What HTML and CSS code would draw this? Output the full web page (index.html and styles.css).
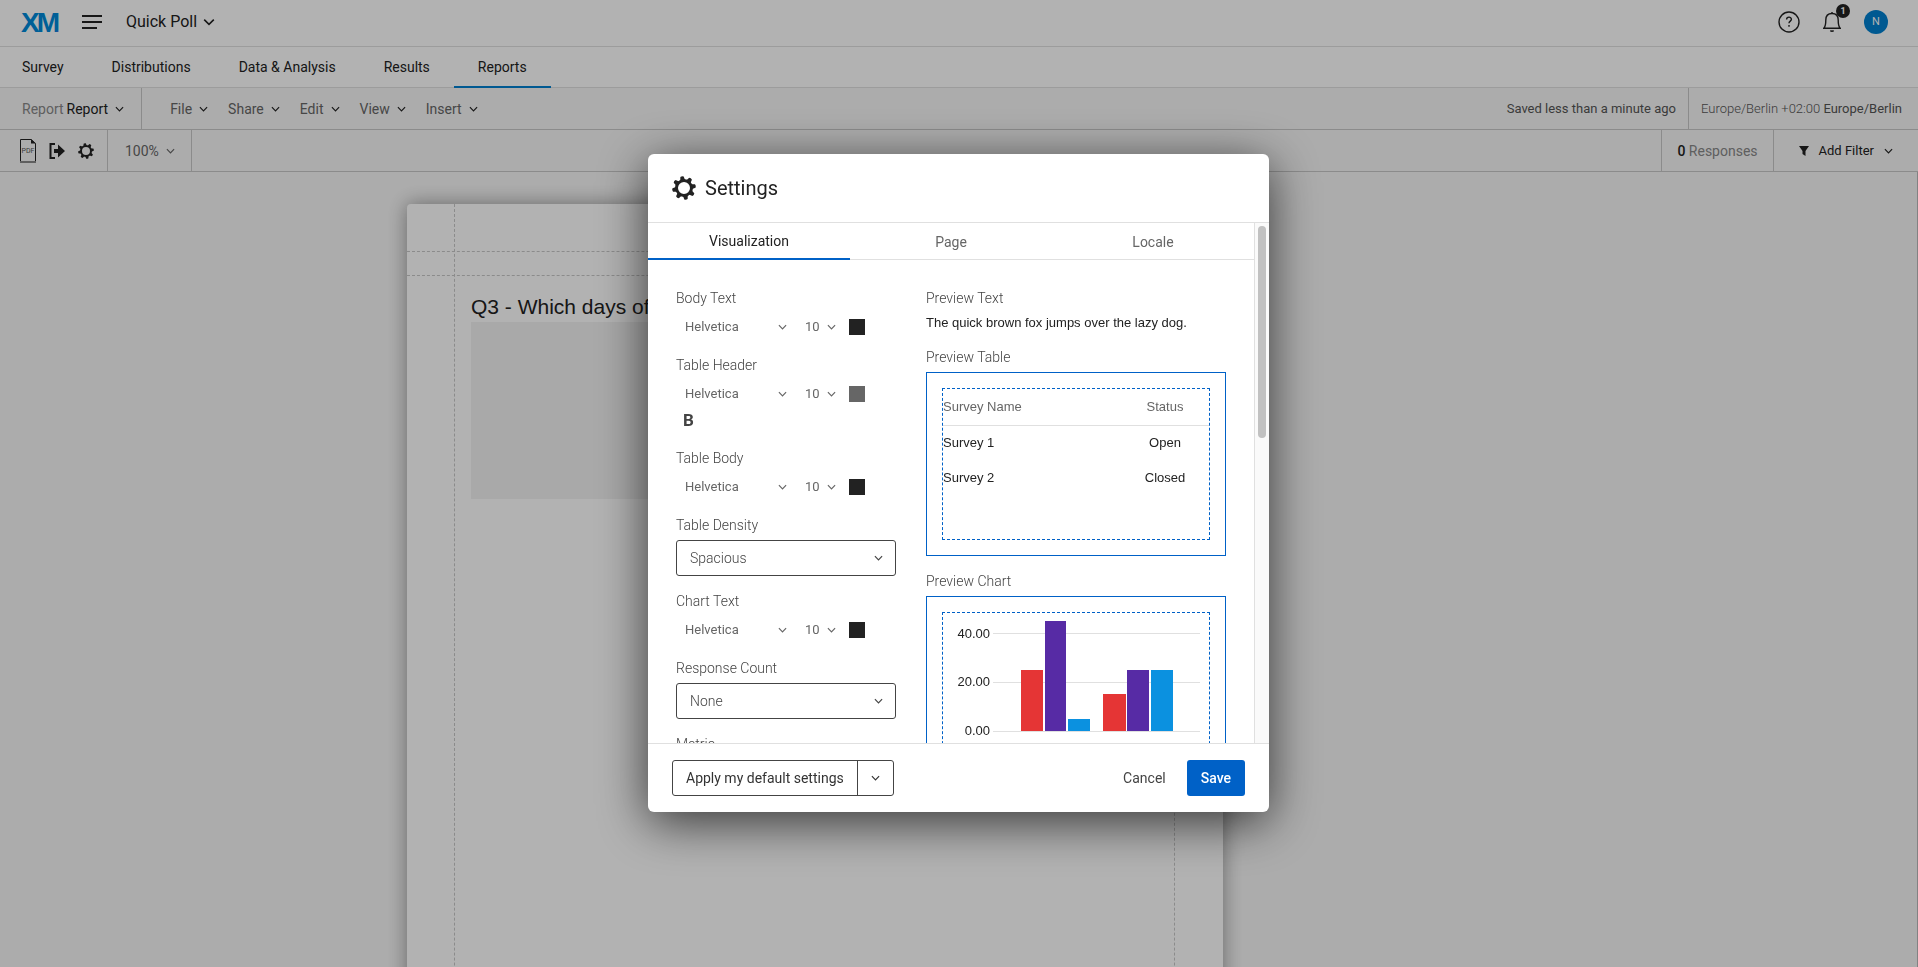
FILE: index.html
```html
<!DOCTYPE html>
<html lang="en">
<head>
    <meta charset="UTF-8">
    <meta name="viewport" content="width=device-width, initial-scale=1.0">
    <title>Quick Poll - Reports</title>
    <link rel="stylesheet" href="styles.css">
</head>
<body>

<!-- shared icons -->
<svg class="sprite" width="0" height="0" aria-hidden="true">
    <symbol id="chevron" viewBox="0 0 10 6">
        <path d="M1 1l4 4 4-4" fill="none" stroke="currentColor" stroke-width="1.3"/>
    </symbol>
    <symbol id="gear" viewBox="0 0 24 24">
        <circle cx="12" cy="12" r="7.5" fill="none" stroke="currentColor" stroke-width="3"/>
        <g fill="currentColor">
            <path id="tooth" d="M9.6 4.2L10.3.6Q12-.4 13.7.6l.7 3.600z" transform="rotate(-10 12 12)"/>
            <use href="#tooth" transform="rotate(45 12 12)"/>
            <use href="#tooth" transform="rotate(90 12 12)"/>
            <use href="#tooth" transform="rotate(135 12 12)"/>
            <use href="#tooth" transform="rotate(180 12 12)"/>
            <use href="#tooth" transform="rotate(225 12 12)"/>
            <use href="#tooth" transform="rotate(270 12 12)"/>
            <use href="#tooth" transform="rotate(315 12 12)"/>
        </g>
    </symbol>
</svg>

<header class="topbar">
    <a href="#" class="logo" aria-label="XM home">
        <svg width="38" height="22" viewBox="0 0 38 22">
            <defs>
                <linearGradient id="xm" x1="0" y1="0" x2="1" y2="1">
                    <stop offset=".84" stop-color="#0088d8"/>
                    <stop offset=".9" stop-color="#8a3ff0"/>
                </linearGradient>
            </defs>
            <text x="0" y="21" fill="url(#xm)">X<tspan dx="-3">M</tspan></text>
        </svg>
    </a>
    <button class="icon-btn menu-btn" aria-label="Menu">
        <svg width="20" height="14" viewBox="0 0 20 14" stroke="currentColor" stroke-width="2"><path d="M0 1h20M0 7h20M0 13h15"/></svg>
    </button>
    <button class="project">Quick Poll <svg class="chevron-lg"><use href="#chevron"/></svg></button>
    <div class="topbar-right">
        <button class="icon-btn" aria-label="Help">
            <svg width="22" height="22" viewBox="0 0 22 22" fill="none" stroke="currentColor" stroke-width="1.4">
                <circle cx="11" cy="11" r="10"/>
                <path d="M8.600 8.600c0-3.200 4.800-3.200 4.800-.3 0 1.900-2.400 1.800-2.400 4"/>
                <path d="M11 14v1.700"/>
            </svg>
        </button>
        <button class="icon-btn bell" aria-label="Notifications">
            <svg width="18" height="20" viewBox="0 0 18 20" fill="none" stroke="currentColor" stroke-width="1.4">
                <path d="M.8 16.200c1.800-1.700 2-3 2-8.200C2.800 3.600 5.500 1.500 9 1.500S15.200 3.600 15.200 8c0 5.200.2 6.500 2 8.200z"/>
                <path d="M9 0v1.500M7.300 18.600q1.700 1.200 3.400 0"/>
            </svg>
            <span class="badge">1</span>
        </button>
        <button class="avatar">N</button>
    </div>
</header>

<nav class="tabs">
    <a href="#">Survey</a>
    <a href="#">Distributions</a>
    <a href="#">Data &amp; Analysis</a>
    <a href="#">Results</a>
    <a href="#" class="active">Reports</a>
</nav>

<div class="menubar">
    <button class="report-select"><span>Report</span> Report <svg class="chevron"><use href="#chevron"/></svg></button>
    <div class="menus">
        <button>File <svg class="chevron"><use href="#chevron"/></svg></button>
        <button>Share <svg class="chevron"><use href="#chevron"/></svg></button>
        <button>Edit <svg class="chevron"><use href="#chevron"/></svg></button>
        <button>View <svg class="chevron"><use href="#chevron"/></svg></button>
        <button>Insert <svg class="chevron"><use href="#chevron"/></svg></button>
    </div>
    <div class="saved">Saved less than a minute ago</div>
    <div class="timezone">Europe/Berlin +02:00 <b>Europe/Berlin</b></div>
</div>

<div class="toolbar">
    <div class="tools">
        <button class="icon-btn" aria-label="Export PDF">
            <svg width="16" height="24" viewBox="0 0 16 24">
                <path d="M.5 22.500V.5h10.500l4.500 4v18" fill="none" stroke="currentColor"/>
                <path d="M11 0v4.500h5z" fill="currentColor"/>
                <path d="M0 23h16" stroke="#888" stroke-width="2"/>
                <text x="8" y="14" text-anchor="middle" class="pdf-text">PDF</text>
            </svg>
        </button>
        <button class="icon-btn" aria-label="Exit">
            <svg width="16" height="16" viewBox="0 0 16 16">
                <path d="M6 1H1.500v14H6" fill="none" stroke="currentColor" stroke-width="2"/>
                <path d="M5 6h4V1.500L16 8l-7 6.500V10H5z" fill="currentColor"/>
            </svg>
        </button>
        <button class="icon-btn" aria-label="Settings"><svg width="16" height="16"><use href="#gear"/></svg></button>
    </div>
    <button class="zoom">100% <svg class="chevron"><use href="#chevron"/></svg></button>
    <div class="responses"><b>0</b> Responses</div>
    <button class="filter">
        <svg width="10" height="10" viewBox="0 0 10 10"><path d="M0 0h10L6.500 5v5l-3-2V5z" fill="currentColor"/></svg>
        Add Filter
        <svg class="chevron"><use href="#chevron"/></svg>
    </button>
</div>

<main class="canvas">
    <div class="sheet">
        <div class="sheet-header"></div>
        <div class="sheet-gap"></div>
        <div class="sheet-body">
            <h1>Q3 - Which days of the week work for you?</h1>
            <div class="placeholder"></div>
        </div>
    </div>
</main>

<div class="overlay">
    <div class="modal" role="dialog" aria-labelledby="modal-title">
        <div class="modal-header">
            <svg width="24" height="24"><use href="#gear"/></svg>
            <h2 id="modal-title">Settings</h2>
        </div>

        <div class="modal-body">
            <div class="modal-content">
                <div class="modal-tabs">
                    <button class="active">Visualization</button>
                    <button>Page</button>
                    <button>Locale</button>
                </div>
                <div class="columns">
                    <form class="fields">
                        <div class="field">
                            <label for="body-font">Body Text</label>
                            <div class="font-row">
                                <div class="select font"><select id="body-font"><option>Helvetica</option></select><svg class="chevron"><use href="#chevron"/></svg></div>
                                <div class="select size"><select aria-label="Body text size"><option>10</option></select><svg class="chevron"><use href="#chevron"/></svg></div>
                                <button type="button" class="swatch" aria-label="Body text color"></button>
                            </div>
                        </div>
                        <div class="field">
                            <label for="header-font">Table Header</label>
                            <div class="font-row">
                                <div class="select font"><select id="header-font"><option>Helvetica</option></select><svg class="chevron"><use href="#chevron"/></svg></div>
                                <div class="select size"><select aria-label="Table header size"><option>10</option></select><svg class="chevron"><use href="#chevron"/></svg></div>
                                <button type="button" class="swatch gray" aria-label="Table header color"></button>
                            </div>
                            <button type="button" class="bold-btn">B</button>
                        </div>
                        <div class="field">
                            <label for="table-font">Table Body</label>
                            <div class="font-row">
                                <div class="select font"><select id="table-font"><option>Helvetica</option></select><svg class="chevron"><use href="#chevron"/></svg></div>
                                <div class="select size"><select aria-label="Table body size"><option>10</option></select><svg class="chevron"><use href="#chevron"/></svg></div>
                                <button type="button" class="swatch" aria-label="Table body color"></button>
                            </div>
                        </div>
                        <div class="field">
                            <label for="density">Table Density</label>
                            <div class="select boxed"><select id="density"><option>Spacious</option></select><svg class="chevron"><use href="#chevron"/></svg></div>
                        </div>
                        <div class="field">
                            <label for="chart-font">Chart Text</label>
                            <div class="font-row">
                                <div class="select font"><select id="chart-font"><option>Helvetica</option></select><svg class="chevron"><use href="#chevron"/></svg></div>
                                <div class="select size"><select aria-label="Chart text size"><option>10</option></select><svg class="chevron"><use href="#chevron"/></svg></div>
                                <button type="button" class="swatch" aria-label="Chart text color"></button>
                            </div>
                        </div>
                        <div class="field">
                            <label for="count">Response Count</label>
                            <div class="select boxed"><select id="count"><option>None</option></select><svg class="chevron"><use href="#chevron"/></svg></div>
                        </div>
                        <div class="field">
                            <label for="metric">Metric</label>
                            <div class="select boxed"><select id="metric"><option>None</option></select><svg class="chevron"><use href="#chevron"/></svg></div>
                        </div>
                    </form>

                    <div class="previews">
                        <h3>Preview Text</h3>
                        <p class="preview-text">The quick brown fox jumps over the lazy dog.</p>

                        <h3>Preview Table</h3>
                        <div class="preview-box">
                            <div class="preview-inner">
                                <table>
                                    <thead>
                                        <tr><th>Survey Name</th><th>Status</th></tr>
                                    </thead>
                                    <tbody>
                                        <tr><td>Survey 1</td><td>Open</td></tr>
                                        <tr><td>Survey 2</td><td>Closed</td></tr>
                                    </tbody>
                                </table>
                            </div>
                        </div>

                        <h3>Preview Chart</h3>
                        <div class="preview-box">
                            <div class="preview-inner">
                                <svg class="chart" width="266" height="150" viewBox="0 0 266 150">
                                    <path d="M50 20.500h207M50 69.500h207M50 118.500h207" stroke="#e0e0e0"/>
                                    <g text-anchor="end">
                                        <text x="47" y="25">40.00</text>
                                        <text x="47" y="73">20.00</text>
                                        <text x="47" y="122">0.00</text>
                                    </g>
                                    <g fill="#e53535">
                                        <rect x="78" y="57" width="22" height="61"/>
                                        <rect x="160" y="81" width="23" height="37"/>
                                    </g>
                                    <g fill="#572ba5">
                                        <rect x="102" y="8" width="21" height="110"/>
                                        <rect x="184" y="57" width="22" height="61"/>
                                    </g>
                                    <g fill="#0b91e0">
                                        <rect x="125" y="106" width="22" height="12"/>
                                        <rect x="208" y="57" width="22" height="61"/>
                                    </g>
                                </svg>
                            </div>
                        </div>
                    </div>
                </div>
            </div>
            <div class="scrollbar"><div class="thumb"></div></div>
        </div>

        <div class="modal-footer">
            <div class="split-btn">
                <button>Apply my default settings</button>
                <button aria-label="More options"><svg class="chevron"><use href="#chevron"/></svg></button>
            </div>
            <button class="cancel">Cancel</button>
            <button class="save">Save</button>
        </div>
    </div>
</div>

</body>
</html>
```
FILE: styles.css
```css
* {
    margin: 0;
    padding: 0;
    box-sizing: border-box;
}

body {
    height: 100vh;
    display: flex;
    flex-direction: column;
    overflow: hidden;
    font-family: Roboto, "Liberation Sans", sans-serif;
    font-size: 14px;
    line-height: 18px;
    color: #222;
    background-color: #f7f7f7;
}

button,
select {
    font: inherit;
    color: inherit;
    background: none;
    border: none;
    cursor: pointer;
}

a {
    color: inherit;
    text-decoration: none;
}

svg {
    display: block;
    flex-shrink: 0;
}

.sprite {
    position: absolute;
}

.chevron {
    width: 9px;
    height: 6px;
}

.chevron-lg {
    width: 12px;
    height: 8px;
}

.icon-btn {
    display: flex;
}

/* Top bar */
.topbar {
    flex-shrink: 0;
    display: flex;
    align-items: center;
    height: 47px;
    padding: 0 30px 2px 21px;
    background-color: #fff;
    border-bottom: 1px solid #e0e0e0;
}

.logo text {
    font-family: "Liberation Sans", sans-serif;
    font-size: 28px;
    font-weight: bold;
}

.menu-btn {
    margin-left: 23px;
}

.project {
    display: flex;
    align-items: center;
    gap: 6px;
    margin-left: 24px;
    font-size: 16px;
}

.topbar-right {
    display: flex;
    align-items: center;
    gap: 23px;
    margin-left: auto;
}

.bell {
    position: relative;
}

.badge {
    position: absolute;
    top: -8px;
    right: -9px;
    width: 14px;
    height: 14px;
    border-radius: 50%;
    background-color: #222;
    color: #fff;
    font-size: 9px;
    font-weight: bold;
    line-height: 14px;
    text-align: center;
}

.avatar {
    width: 24px;
    height: 24px;
    border-radius: 50%;
    background-color: #0080d0;
    color: #fff;
    font-size: 11px;
}

/* Section tabs */
.tabs {
    flex-shrink: 0;
    display: flex;
    height: 41px;
    background-color: #fff;
    border-bottom: 1px solid #e0e0e0;
}

.tabs a {
    height: 41px;
    padding: 0 24px;
    line-height: 41px;
}

.tabs a:first-child {
    padding-left: 22px;
}

.tabs .active {
    border-bottom: 2px solid #0080d0;
}

/* Menu bar and toolbar */
.menubar,
.toolbar {
    flex-shrink: 0;
    display: flex;
    height: 42px;
    border-bottom: 1px solid #c8c8c8;
}

.menubar button,
.toolbar button {
    display: flex;
    align-items: center;
    gap: 7px;
}

.menubar .report-select {
    padding: 0 17px 0 22px;
    border-right: 1px solid #c8c8c8;
    gap: 3px;
}

.report-select span {
    color: #888;
}

.report-select .chevron {
    margin-left: 4px;
}

.menus {
    display: flex;
    gap: 20px;
    padding-left: 28px;
    color: #666;
}

.menus .chevron {
    color: #222;
}

.saved,
.timezone {
    font-size: 13px;
    line-height: 41px;
    color: #555;
}

.saved {
    margin-left: auto;
    padding-right: 12px;
}

.timezone {
    padding: 0 16px 0 12px;
    border-left: 1px solid #c8c8c8;
    font-weight: 300;
}

.timezone b {
    font-weight: 400;
}

.tools {
    display: flex;
    align-items: center;
    gap: 13px;
    padding: 0 13px 0 20px;
    border-right: 1px solid #c8c8c8;
}

.pdf-text {
    font-size: 7px;
    fill: #555;
}

.toolbar .zoom {
    padding: 0 16px 0 17px;
    border-right: 1px solid #c8c8c8;
    color: #666;
}

.responses {
    margin-left: auto;
    padding: 0 15px;
    border-left: 1px solid #c8c8c8;
    line-height: 42px;
    color: #888;
}

.responses b {
    font-weight: 500;
    color: #222;
}

.toolbar .filter {
    gap: 10px;
    padding: 0 25px;
    border-left: 1px solid #c8c8c8;
    font-size: 13px;
}

/* Report page */
.canvas {
    flex: 1;
    min-height: 0;
    display: flex;
    justify-content: center;
    padding: 32px 287px 0 0;
    border-right: 1px solid #bbb;
    overflow: hidden;
}

.sheet {
    position: relative;
    display: flex;
    flex-direction: column;
    width: 816px;
    height: 1056px;
    flex-shrink: 0;
    background-color: #fff;
    border-radius: 4px 4px 0 0;
    box-shadow: 0 0 20px rgba(0, 0, 0, 0.4);
}

/* side margin guides */
.sheet::before {
    content: "";
    position: absolute;
    inset: 0 48px 0 47px;
    border: 1px dashed #c8c8c8;
    border-width: 0 1px;
}

.sheet-header {
    height: 48px;
    border-bottom: 1px dashed #c8c8c8;
}

.sheet-gap {
    height: 24px;
    border-bottom: 1px dashed #c8c8c8;
}

.sheet-body {
    padding: 16px 64px;
}

.sheet-body h1 {
    font-family: "Liberation Sans", sans-serif;
    font-size: 21px;
    font-weight: normal;
    line-height: 30px;
}

.placeholder {
    height: 177px;
    background-color: #f2f2f2;
}

/* Settings modal */
.overlay {
    position: fixed;
    inset: 0;
    display: flex;
    align-items: center;
    justify-content: center;
    padding: 0 1px 1px 0;
    background-color: rgba(0, 0, 0, 0.3);
}

.modal {
    display: flex;
    flex-direction: column;
    width: 621px;
    height: 658px;
    max-height: 100%;
    background-color: #fff;
    border-radius: 6px;
    box-shadow: 0 10px 50px rgba(0, 0, 0, 0.7);
    overflow: hidden;
}

.modal-header {
    display: flex;
    align-items: center;
    gap: 9px;
    height: 69px;
    padding: 0 24px;
    border-bottom: 1px solid #e0e0e0;
}

.modal-header h2 {
    font-size: 20px;
    font-weight: normal;
    line-height: 24px;
}

.modal-body {
    flex: 1;
    min-height: 0;
    display: flex;
    overflow: hidden;
}

.modal-content {
    flex: 1;
    overflow: hidden;
}

.scrollbar {
    width: 15px;
    padding: 3px 2px 3px 3px;
    background-color: #fafafa;
    border-left: 1px solid #e0e0e0;
}

.thumb {
    width: 8px;
    height: 212px;
    border-radius: 4px;
    background-color: #c1c1c1;
}

.modal-tabs {
    display: flex;
    height: 37px;
    border-bottom: 1px solid #e0e0e0;
    color: #666;
}

.modal-tabs button {
    flex: 1;
    height: 37px;
}

.modal-tabs .active {
    color: #222;
    border-bottom: 2px solid #0061c7;
}

.columns {
    display: flex;
    justify-content: space-between;
    padding: 29px 28px;
}

.fields {
    width: 220px;
}

.field {
    margin-bottom: 16px;
    color: #666;
}

.field label,
.previews h3 {
    display: block;
    margin-bottom: 6px;
    font-size: 14px;
    font-weight: 300;
    line-height: 18px;
    color: #444;
}

.select {
    position: relative;
}

.select select {
    appearance: none;
    width: 100%;
    height: 100%;
    outline: none;
}

.select .chevron {
    position: absolute;
    right: 12px;
    top: 50%;
    margin-top: -3px;
    pointer-events: none;
}

.font-row {
    display: flex;
    align-items: center;
    height: 27px;
    font-size: 13px;
}

.select.font {
    width: 120px;
    padding-left: 9px;
}

.select.size {
    width: 48px;
    padding-left: 9px;
}

.select.font .chevron {
    right: 9px;
}

.select.size .chevron {
    right: 8px;
}

.swatch {
    width: 16px;
    height: 16px;
    margin-left: 5px;
    background-color: #222;
}

.swatch.gray {
    background-color: #666;
}

.bold-btn {
    display: block;
    height: 26px;
    padding: 0 7px;
    font-size: 17px;
    font-weight: bold;
    color: #444;
}

.select.boxed {
    height: 36px;
    border: 1px solid #444;
    border-radius: 3px;
    font-weight: 300;
    color: #444;
}

.boxed select {
    padding-left: 13px;
}

.previews {
    width: 300px;
    font-family: "Liberation Sans", sans-serif;
    font-size: 13px;
}

.previews h3 {
    font-family: Roboto, "Liberation Sans", sans-serif;
}

.preview-text {
    height: 19px;
    margin-bottom: 16px;
    line-height: 19px;
    white-space: nowrap;
}

.preview-box {
    height: 184px;
    margin-bottom: 16px;
    padding: 15px;
    border: 1px solid #0061c7;
}

.preview-inner {
    height: 100%;
    border: 1px dashed #0061c7;
}

.preview-inner table {
    width: 100%;
    border-collapse: collapse;
}

.preview-inner th {
    height: 36px;
    font-weight: normal;
    color: #666;
    border-bottom: 1px solid #e0e0e0;
}

.preview-inner td {
    height: 35px;
}

.preview-inner th:first-child {
    text-align: left;
}

.preview-inner th:last-child,
.preview-inner td:last-child {
    width: 88px;
    text-align: center;
}

.chart text {
    font-size: 13px;
    fill: #222;
}

.modal-footer {
    display: flex;
    align-items: center;
    gap: 8px;
    height: 69px;
    padding: 0 24px;
    border-top: 1px solid #e0e0e0;
}

.modal-footer button {
    height: 34px;
    padding: 0 13px;
}

.split-btn {
    display: flex;
    margin-right: auto;
    border: 1px solid #444;
    border-radius: 3px;
    color: #333;
}

.split-btn button + button {
    border-left: 1px solid #444;
}

.modal-footer .cancel {
    color: #444;
}

.modal-footer .save {
    height: 36px;
    padding: 0 14px;
    border-radius: 3px;
    background-color: #0061c7;
    color: #fff;
    font-weight: 500;
}
```
